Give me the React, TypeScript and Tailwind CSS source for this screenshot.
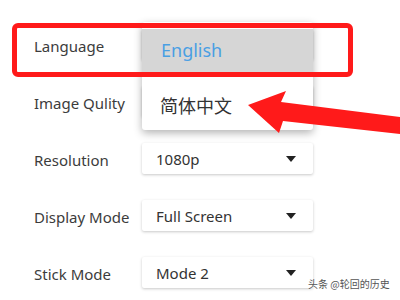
import React from "react";

const font = { fontFamily: '"Noto Sans", "Noto Sans CJK SC", sans-serif' };

function Caret() {
  return (
    <svg width="10" height="6" viewBox="0 0 10 6" className="shrink-0">
      <path d="M0 0 L10 0 L5 6 Z" fill="#222" />
    </svg>
  );
}

function Row({ label, value }: { label: string; value?: string }) {
  return (
    <div className="flex items-center h-[31px]">
      <div className="w-[108px] pt-[3px] text-[15px] text-[#3c3c3c] leading-none">{label}</div>
      <div className="w-[171px] h-[31px] bg-white rounded-[2px] shadow-[0_1px_3px_rgba(0,0,0,0.22)] flex items-center justify-between pl-[14px] pr-[17px]">
        <span className="pt-[2px] text-[15px] text-[#333] leading-none">{value}</span>
        {value ? <Caret /> : null}
      </div>
    </div>
  );
}

export default function App() {
  return (
    <div className="relative w-[400px] h-[300px] bg-white overflow-hidden" style={font}>
      <div className="flex flex-col gap-[26px] pt-[29px] pl-[34px]">
        <Row label="Language" />
        <Row label="Image Qulity" />
        <Row label="Resolution" value="1080p" />
        <Row label="Display Mode" value="Full Screen" />
        <Row label="Stick Mode" value="Mode 2" />
      </div>

      {/* dropdown menu */}
      <div className="absolute left-[142px] top-[22px] w-[171px] h-[108px] bg-white rounded-[3px] shadow-[0_3px_8px_rgba(0,0,0,0.3)] flex flex-col pt-[7px]">
        <div className="h-[46px] bg-[#d6d6d6] flex items-center pl-[19px] pb-[4px] text-[18px] text-[#4a9fe3] leading-none">
          English
        </div>
        <div className="h-[55px] flex items-center pl-[18px] pt-[6px] text-[18px] text-[#333] leading-none">
          简体中文
        </div>
      </div>

      {/* red highlight box */}
      <div className="absolute left-[12px] top-[23px] w-[341px] h-[54px] border-[5px] border-[#ff1a1a] rounded-[6px]" />

      {/* red arrow */}
      <svg className="absolute left-0 top-0" width="400" height="300" viewBox="0 0 400 300">
        <polygon
          points="248,105 286,91 281,102 400,117 400,134 283,121 279,133"
          fill="#ff1a1a"
        />
      </svg>

      {/* watermark */}
      <div
        className="absolute left-[308px] top-[279px] text-[10px] text-[#555] leading-none whitespace-nowrap [text-shadow:0_0_2px_#fff]"
        style={{ fontFamily: '"Noto Sans CJK SC", sans-serif' }}
      >
        头条 @轮回的历史
      </div>
    </div>
  );
}
